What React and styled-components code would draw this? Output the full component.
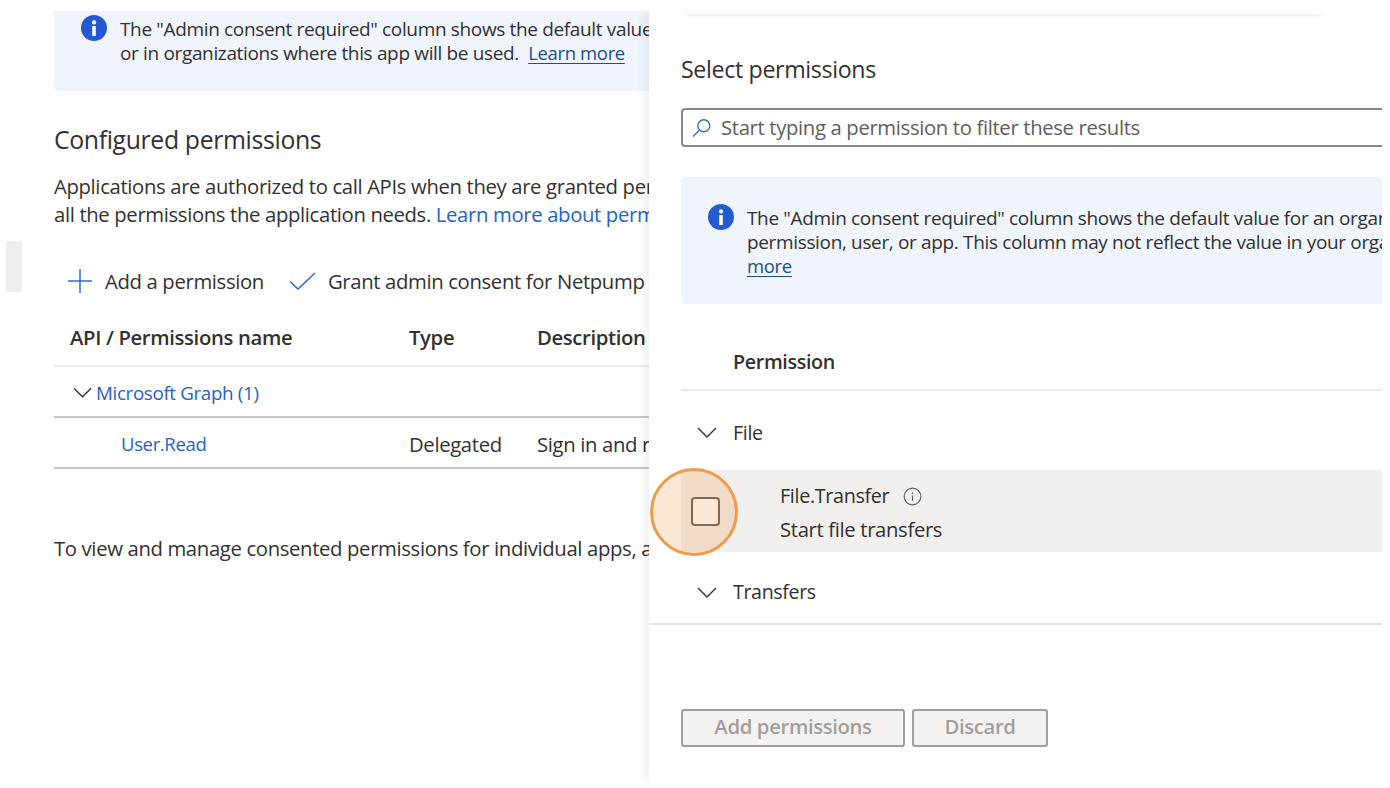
import React from 'react'
import styled, { createGlobalStyle } from 'styled-components'

const GlobalStyle = createGlobalStyle`
  html, body { margin: 0; padding: 0; background: #fff; }
  body { font-family: "Open Sans", "Noto Sans", sans-serif; color: #323130; }
`

const Page = styled.div`
  padding: 11px 8px 9px 6px;
  height: 788px;
  box-sizing: border-box;
`

const Card = styled.div`
  position: relative;
  display: flex;
  height: 768px;
  border-radius: 16px;
  overflow: hidden;
  background: #fff;
  box-shadow: 0 0 3px rgba(0, 0, 0, 0.03);
`

const Rail = styled.div`
  width: 16px;
  flex: none;
  padding-top: 230px;
`

const RailItem = styled.div`
  height: 51px;
  background: #eeeeee;
`

const Main = styled.div`
  width: 627px;
  flex: none;
  padding-left: 32px;
  box-sizing: border-box;
  white-space: nowrap;
  overflow: hidden;
`

const Text = styled.div`
  font-size: ${p => p.$size || 20.3}px;
  line-height: ${p => p.$line || 28}px;
  letter-spacing: ${p => p.$spacing || -0.35}px;
  font-weight: ${p => p.$weight || 400};
  color: ${p => p.$color || '#323130'};
  margin-top: ${p => p.$top || 0}px;
`

const BlueLink = styled.span`
  color: #2563c4;
`

const UnderLink = styled.span`
  color: #1c4f8c;
  font-size: 18.5px;
  text-decoration: underline;
  text-underline-offset: 3px;
`

const TopBanner = styled.div`
  display: flex;
  gap: 13px;
  height: 80px;
  padding-left: 27px;
  background: #eff4fd;
  border-radius: 0 0 0 4px;
`

const BannerIcon = styled.div`
  flex: none;
  height: 26px;
  margin-top: ${p => p.$top}px;
`

const Toolbar = styled.div`
  display: flex;
  align-items: center;
  height: 40px;
  margin-top: 33px;
  padding-left: 14px;
`

const ToolbarButton = styled.div`
  display: flex;
  align-items: center;
  gap: ${p => p.$gap}px;
  margin-right: 25px;
`

const Table = styled.div`
  margin-top: 9px;
`

const TableRow = styled.div`
  display: grid;
  grid-template-columns: 339px 128px 1fr;
  align-items: center;
  height: ${p => p.$height}px;
  padding-left: 16px;
  padding-top: ${p => p.$pad || 0}px;
  padding-bottom: ${p => p.$padBottom || 0}px;
  border-bottom: 2px solid ${p => p.$line};
  box-sizing: border-box;
`

const GroupCell = styled.div`
  display: flex;
  align-items: center;
  gap: 4px;
  padding-left: 3px;
`

const NameCell = styled.div`
  padding-left: 51px;
`

const Panel = styled.div`
  position: relative;
  flex: 1;
  min-width: 0;
  padding-left: 32px;
  white-space: nowrap;
  overflow: hidden;
  background: #fff;
  box-shadow: -6px 0 8px rgba(0, 0, 0, 0.05);
`

const PanelTop = styled.div`
  height: 3px;
  margin: 0 61px 0 5px;
  box-shadow: 0 1px 5px rgba(0, 0, 0, 0.14);
`

const PanelTitle = styled(Text)`
  margin-top: 39px;
`

const SearchBox = styled.div`
  display: flex;
  align-items: center;
  gap: 10px;
  height: 39px;
  margin-top: 23px;
  margin-right: -20px;
  padding-left: 9px;
  border: 2px solid #8a8886;
  border-radius: 4px;
  box-sizing: border-box;
`

const PanelBanner = styled.div`
  display: flex;
  gap: 13px;
  height: 127px;
  margin-top: 30px;
  margin-right: -20px;
  padding: 29px 0 0 27px;
  background: #eff4fd;
  border-radius: 4px;
  box-sizing: border-box;
`

const PermissionHeader = styled.div`
  height: 87px;
  padding: 44px 0 0 52px;
  border-bottom: 2px solid #ebebeb;
  margin-right: -20px;
  box-sizing: border-box;
`

const Group = styled.div`
  display: flex;
  align-items: center;
  gap: 16px;
  height: ${p => p.$height}px;
  padding: ${p => p.$pad}px 0 0 16px;
  box-sizing: border-box;
`

const SelectRow = styled.div`
  display: flex;
  align-items: center;
  height: 82px;
  padding-left: 10px;
  background: #f1f0ef;
  margin-right: -20px;
`

const Checkbox = styled.div`
  flex: none;
  width: 29px;
  height: 29px;
  border: 2px solid #6b5b50;
  border-radius: 4px;
  box-sizing: border-box;
  background: #fff;
`

const PermissionText = styled.div`
  margin: 3px 0 0 60px;
`

const PermissionName = styled.div`
  display: flex;
  align-items: center;
  gap: 14px;
`

const GroupLine = styled.div`
  height: 2px;
  margin: 0 -20px 0 -32px;
  background: #e4e4e4;
`

const Actions = styled.div`
  display: flex;
  gap: 7px;
  margin-top: 84px;
`

const ActionButton = styled.div`
  display: flex;
  align-items: center;
  justify-content: center;
  width: ${p => p.$width}px;
  height: 38px;
  padding-bottom: 5px;
  background: #f3f2f1;
  border: 2px solid #a19f9d;
  border-radius: 3px;
  box-sizing: border-box;
  color: #a19f9d;
  font-size: 20.3px;
  font-weight: 600;
  letter-spacing: -0.35px;
`

const Spotlight = styled.div`
  position: absolute;
  left: 644px;
  top: 457px;
  width: 88px;
  height: 88px;
  border: 3px solid #f09a4c;
  border-radius: 50%;
  box-sizing: border-box;
  background: rgba(240, 150, 70, 0.22);
`

const Svg = styled.svg`
  display: block;
  flex: none;
`

const InfoFilled = () => (
  <Svg width="26" height="26" viewBox="0 0 26 26">
    <circle cx="13" cy="13" r="13" fill="#2359d1" />
    <circle cx="13" cy="7.4" r="2.1" fill="#fff" />
    <rect x="11.2" y="11" width="3.6" height="10" rx="0.6" fill="#fff" />
  </Svg>
)

const InfoOutline = () => (
  <Svg width="19" height="19" viewBox="0 0 20 20" fill="none">
    <circle cx="10" cy="10" r="8.8" stroke="#605e5c" strokeWidth="1.2" />
    <circle cx="10" cy="6.4" r="0.9" fill="#605e5c" />
    <path d="M10 9v5.6" stroke="#605e5c" strokeWidth="1.2" />
  </Svg>
)

const Chevron = ({ size = 20 }) => (
  <Svg width={size} height="11" viewBox="0 0 20 11" fill="none">
    <path d="M1 1L10 10L19 1" stroke="#323130" strokeWidth="1.4" />
  </Svg>
)

const PlusIcon = () => (
  <Svg width="24" height="24" viewBox="0 0 24 24" fill="none">
    <path d="M12 0v24M0 12h24" stroke="#2f6fd0" strokeWidth="1.5" />
  </Svg>
)

const CheckIcon = () => (
  <Svg width="27" height="18" viewBox="0 0 27 18" fill="none">
    <path d="M1 9.5L9 17L26 1" stroke="#2f6fd0" strokeWidth="1.6" />
  </Svg>
)

const SearchIcon = () => (
  <Svg width="19" height="18" viewBox="0 0 19 18" fill="none">
    <circle cx="11.8" cy="6.8" r="6" stroke="#2f6fd0" strokeWidth="1.4" />
    <path d="M7.4 11.2L1 17.5" stroke="#2f6fd0" strokeWidth="1.4" />
  </Svg>
)

export default function App() {
  return (
    <Page>
      <GlobalStyle />
      <Card>
        <Rail>
          <RailItem />
        </Rail>
        <Main>
          <TopBanner>
            <BannerIcon $top={4}>
              <InfoFilled />
            </BannerIcon>
            <div>
              <Text $size={19} $line={24} $top={6}>The "Admin consent required" column shows the default value for an organization</Text>
              <Text $size={19} $line={24}>or in organizations where this app will be used.&nbsp; <UnderLink>Learn more</UnderLink></Text>
            </div>
          </TopBanner>
          <Text $size={24.8} $line={32} $top={32}>Configured permissions</Text>
          <Text $top={17}>Applications are authorized to call APIs when they are granted permissions by users</Text>
          <Text>all the permissions the application needs. <BlueLink>Learn more about permissions</BlueLink></Text>
          <Toolbar>
            <ToolbarButton $gap={13}>
              <PlusIcon />
              <Text>Add a permission</Text>
            </ToolbarButton>
            <ToolbarButton $gap={12}>
              <CheckIcon />
              <Text>Grant admin consent for Netpump</Text>
            </ToolbarButton>
          </Toolbar>
          <Table>
            <TableRow $height={57} $padBottom={2} $line="#ececec">
              <Text $weight={600}>API / Permissions name</Text>
              <Text $weight={600}>Type</Text>
              <Text $weight={600}>Description</Text>
            </TableRow>
            <TableRow $height={51} $pad={2} $line="#c8c8c8">
              <GroupCell>
                <Chevron size={19} />
                <Text $size={18.8} $color="#2563c4">Microsoft Graph (1)</Text>
              </GroupCell>
            </TableRow>
            <TableRow $height={51} $pad={2} $line="#c8c8c8">
              <NameCell>
                <Text $size={18.5} $color="#2563c4">User.Read</Text>
              </NameCell>
              <Text>Delegated</Text>
              <Text>Sign in and read user profile</Text>
            </TableRow>
          </Table>
          <Text $top={65}>To view and manage consented permissions for individual apps, as well as your tenant</Text>
        </Main>
        <Panel>
          <PanelTop />
          <PanelTitle $size={23.2} $line={32}>Select permissions</PanelTitle>
          <SearchBox>
            <SearchIcon />
            <Text $top={-2} $color="#605e5c">Start typing a permission to filter these results</Text>
          </SearchBox>
          <PanelBanner>
            <BannerIcon $top={-2}>
              <InfoFilled />
            </BannerIcon>
            <div>
              <Text $size={19} $line={24}>The "Admin consent required" column shows the default value for an organization</Text>
              <Text $size={19} $line={24}>permission, user, or app. This column may not reflect the value in your organization</Text>
              <Text $size={19} $line={24}><UnderLink>more</UnderLink></Text>
            </div>
          </PanelBanner>
          <PermissionHeader>
            <Text $size={19.7} $weight={600}>Permission</Text>
          </PermissionHeader>
          <Group $height={79} $pad={4}>
            <Chevron />
            <Text $size={19.7}>File</Text>
          </Group>
          <SelectRow>
            <Checkbox />
            <PermissionText>
              <PermissionName>
                <Text $size={19.8} $line={34}>File.Transfer</Text>
                <InfoOutline />
              </PermissionName>
              <Text $line={33}>Start file transfers</Text>
            </PermissionText>
          </SelectRow>
          <Group $height={71} $pad={9}>
            <Chevron />
            <Text $size={19.6}>Transfers</Text>
          </Group>
          <GroupLine />
          <Actions>
            <ActionButton $width={224}>Add permissions</ActionButton>
            <ActionButton $width={136}>Discard</ActionButton>
          </Actions>
        </Panel>
        <Spotlight />
      </Card>
    </Page>
  )
}
